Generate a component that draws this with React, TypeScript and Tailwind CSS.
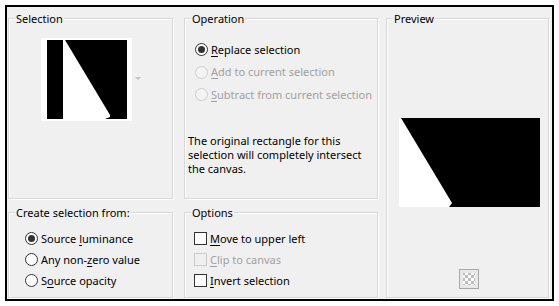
import React from "react";

const FONT = "font-['Noto_Sans','Open_Sans',sans-serif]";

const GroupBox: React.FC<{ title: string; className?: string; children?: React.ReactNode }> = ({
  title,
  className = "",
  children,
}) => (
  <div
    className={`relative border border-[#d8d8d8] shadow-[inset_1px_1px_0_#ffffff,1px_1px_0_#ffffff] ${className}`}
  >
    <span className="absolute left-[6px] top-[-8px] bg-[#f0f0f0] px-[1px] text-[11px] leading-[16px] text-black">
      {title}
    </span>
    {children}
  </div>
);

const Radio: React.FC<{ checked?: boolean; disabled?: boolean; children: React.ReactNode }> = ({
  checked,
  disabled,
  children,
}) => (
  <div className="flex h-[13px] items-center gap-[3px]">
    <span
      className={`flex h-[13px] w-[13px] shrink-0 items-center justify-center rounded-full border ${
        disabled ? "border-[#cccccc] bg-[#f4f4f4]" : "border-[#333333] bg-white"
      }`}
    >
      {checked && <span className="h-[7px] w-[7px] rounded-full bg-[#333333]" />}
    </span>
    <span className={`whitespace-nowrap text-[11px] leading-[16px] ${disabled ? "text-[#a0a0a0]" : "text-black"}`}>
      {children}
    </span>
  </div>
);

const Check: React.FC<{ disabled?: boolean; children: React.ReactNode }> = ({ disabled, children }) => (
  <div className="flex h-[13px] items-center gap-[3px]">
    <span
      className={`h-[13px] w-[13px] shrink-0 border ${
        disabled ? "border-[#cccccc] bg-[#f0f0f0]" : "border-[#333333] bg-white"
      }`}
    />
    <span className={`whitespace-nowrap text-[11px] leading-[16px] ${disabled ? "text-[#a0a0a0]" : "text-black"}`}>
      {children}
    </span>
  </div>
);

const U: React.FC<{ children: React.ReactNode }> = ({ children }) => (
  <span className="underline decoration-1 underline-offset-[2px]">{children}</span>
);

const Thumbnail = () => (
  <svg width="91" height="83" viewBox="0 0 91 83" className="block">
    <rect width="91" height="83" fill="#ffffff" />
    <rect x="6" y="2" width="80" height="79" fill="#000000" />
    <polygon points="22,2 24,2 69,77 69,79 64,81 22,81" fill="#ffffff" />
  </svg>
);

const PreviewImage = () => (
  <svg width="141" height="89" viewBox="0 0 141 89" className="block">
    <rect width="141" height="89" fill="#000000" />
    <polygon points="0,0 2,0 53,85 50,89 0,89" fill="#ffffff" />
  </svg>
);

const Checker = () => (
  <svg width="20" height="20" viewBox="0 0 20 20" className="block">
    <defs>
      <pattern id="chk" width="6" height="6" patternUnits="userSpaceOnUse">
        <rect width="6" height="6" fill="#ffffff" />
        <rect width="3" height="3" fill="#bdbdbd" />
        <rect x="3" y="3" width="3" height="3" fill="#bdbdbd" />
      </pattern>
    </defs>
    <rect x="0.5" y="0.5" width="19" height="19" fill="#e8e8e8" stroke="#a8a8a8" />
    <rect x="4" y="4" width="12" height="12" fill="url(#chk)" />
  </svg>
);

export default function App() {
  return (
    <div className={`h-[306px] w-[559px] bg-white pl-[5px] pt-[5px] ${FONT}`}>
      <div className="h-[296px] w-[549px] border-2 border-black bg-[#f0f0f0] pl-[1px] pr-[3px] pt-[11px]">
        <div className="grid grid-cols-[165px_205px_171px] grid-rows-[181px_86px] gap-y-[13px]">
          <GroupBox title="Selection" className="col-start-1 row-start-1">
            <div className="flex items-center pl-[32px] pt-[19px]">
              <Thumbnail />
              <svg width="6" height="4" viewBox="0 0 6 4" className="ml-[3px] mt-[-1px] block">
                <polygon points="0,0 6,0 3,3" fill="#c4c4c4" />
              </svg>
            </div>
          </GroupBox>

          <GroupBox title="Operation" className="col-start-2 row-start-1 ml-[11px] w-[194px]">
            <div className="flex flex-col gap-[9.5px] pl-[10px] pt-[24px]">
              <Radio checked>
                <U>R</U>eplace selection
              </Radio>
              <Radio disabled>
                <U>A</U>dd to current selection
              </Radio>
              <Radio disabled>
                <U>S</U>ubtract from current selection
              </Radio>
            </div>
            <p className="pl-[3px] pt-[33px] text-[11px] leading-[14px] text-black">
              The original rectangle for this
              <br />
              selection will completely intersect
              <br />
              the canvas.
            </p>
          </GroupBox>

          <GroupBox title="Preview" className="col-start-3 row-span-2 row-start-1 ml-[8px] w-[163px]">
            <div className="pl-[12px] pt-[99px]">
              <PreviewImage />
            </div>
            <div className="pl-[72px] pt-[62px]">
              <Checker />
            </div>
          </GroupBox>

          <GroupBox title="Create selection from:" className="col-start-1 row-start-2">
            <div className="flex flex-col gap-[8px] pl-[16px] pt-[19px]">
              <Radio checked>
                Source <U>l</U>uminance
              </Radio>
              <Radio>
                Any non-<U>z</U>ero value
              </Radio>
              <Radio>
                S<U>o</U>urce opacity
              </Radio>
            </div>
          </GroupBox>

          <GroupBox title="Options" className="col-start-2 row-start-2 ml-[11px] w-[194px]">
            <div className="flex flex-col gap-[8px] pl-[9px] pt-[19px]">
              <Check>
                <U>M</U>ove to upper left
              </Check>
              <Check disabled>
                <U>C</U>lip to canvas
              </Check>
              <Check>
                <U>I</U>nvert selection
              </Check>
            </div>
          </GroupBox>
        </div>
      </div>
    </div>
  );
}
